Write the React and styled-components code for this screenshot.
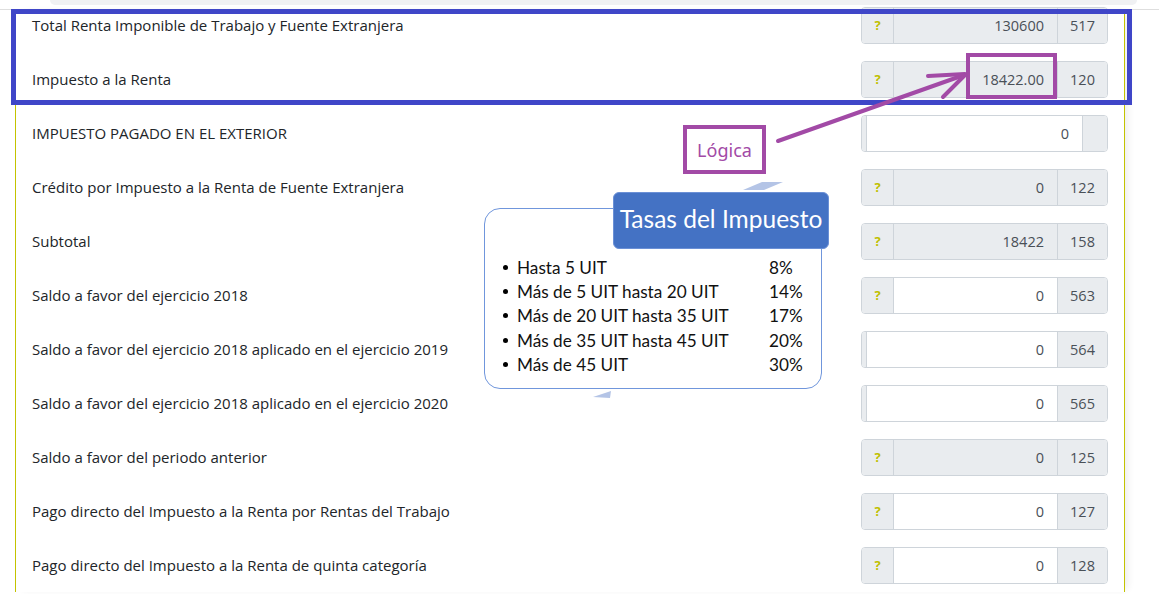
import React from 'react';
import styled, { createGlobalStyle } from 'styled-components';

const GlobalStyle = createGlobalStyle`
    body {
        margin: 0;
        background: #fff;
        font-family: "Open Sans", "Noto Sans", sans-serif;
        color: #212529;
        overflow: hidden;
    }
`;

const Page = styled.div`
    position: relative;
    width: 1159px;
    height: 594px;
    overflow: hidden;
`;

const TopStrip = styled.div`
    height: 5px;
    margin: 0 22px 0 50px;
    background: #f0f1f3;
    border-radius: 0 0 12px 12px;
`;

const Divider = styled.div`
    margin-top: 4px;
    border-top: 1px solid #dedede;
`;

const Card = styled.section`
    width: 1108px;
    margin-left: 15px;
    border-left: 1px solid #c3c300;
    border-right: 1px solid #c3c300;
    box-shadow: 5px 0 8px -3px rgba(0, 0, 0, 0.09);
    background: #fff;
`;

const Row = styled.div`
    display: flex;
    align-items: center;
    height: ${p => (p.first ? '42px' : '54px')};
    padding: 0 16px ${p => (p.first ? '12px' : '0')} 16px;
    box-sizing: border-box;
`;

const Label = styled.div`
    flex: 1;
    font-size: 15px;
    color: #212529;
`;

const Group = styled.div`
    display: flex;
    width: 247px;
    height: 37px;
    border: 1px solid #ced4da;
    border-radius: 4px;
    box-sizing: border-box;
    overflow: hidden;
    font-size: 14.5px;
    color: #495057;
`;

const Help = styled.div`
    width: 31px;
    background: #e9ecef;
    border-right: 1px solid #ced4da;
    display: flex;
    align-items: center;
    justify-content: center;
    font-weight: 700;
    font-size: 13px;
    color: #bfbf00;
`;

const Sliver = styled.div`
    width: 4px;
    background: #e9ecef;
    border-right: 1px solid #ced4da;
`;

const Value = styled.div`
    flex: 1;
    background: ${p => (p.readOnly ? '#e9ecef' : '#fff')};
    display: flex;
    align-items: center;
    justify-content: flex-end;
    padding-right: 13px;
`;

const Code = styled.div`
    width: ${p => (p.empty ? '24px' : '49px')};
    background: #e9ecef;
    border-left: 1px solid #ced4da;
    display: flex;
    align-items: center;
    justify-content: center;
`;

const Highlight = styled.div`
    position: absolute;
    left: ${p => p.x}px;
    top: ${p => p.y}px;
    width: ${p => p.w}px;
    height: ${p => p.h}px;
    border: ${p => p.bw}px solid ${p => p.color};
    box-sizing: border-box;
`;

const LogicBox = styled.div`
    position: absolute;
    left: 683px;
    top: 125px;
    width: 83px;
    height: 49px;
    border: 4px solid #a24aa6;
    box-sizing: border-box;
    display: flex;
    align-items: center;
    justify-content: center;
    font-size: 18px;
    color: #a24aa6;
    font-family: "Noto Sans", sans-serif;
`;

const Overlay = styled.svg`
    position: absolute;
    left: 0;
    top: 0;
    pointer-events: none;
`;

const Rates = styled.div`
    position: absolute;
    left: 484px;
    top: 208px;
    width: 338px;
    height: 181px;
    border: 1.5px solid #7096dc;
    border-radius: 16px;
    background: #fff;
    box-sizing: border-box;
    padding: 46px 0 0 12px;
    font-family: Lato, "Noto Sans", sans-serif;
`;

const RatesTitle = styled.div`
    position: absolute;
    left: 128px;
    top: -17px;
    width: 216px;
    height: 57px;
    padding-bottom: 5px;
    background: #4472c4;
    border: 1px solid #6b90d6;
    border-radius: 6px;
    box-sizing: border-box;
    display: flex;
    align-items: center;
    justify-content: center;
    color: #fff;
    font-size: 24.5px;
`;

const RateList = styled.ul`
    margin: 0;
    padding: 0;
    list-style: none;
`;

const RateItem = styled.li`
    display: flex;
    align-items: center;
    height: 24.4px;
    font-size: 17.2px;
    color: #111;
    &::before {
        content: '';
        width: 5px;
        height: 5px;
        border-radius: 50%;
        background: #000;
        margin: 0 9px 0 6px;
    }
`;

const RateText = styled.span`
    width: 252px;
`;

const rows = [
    { label: 'Total Renta Imponible de Trabajo y Fuente Extranjera', help: true, ro: true, value: '130600', code: '517' },
    { label: 'Impuesto a la Renta', help: true, ro: true, value: '18422.00', code: '120' },
    { label: 'IMPUESTO PAGADO EN EL EXTERIOR', help: false, ro: false, value: '0', code: '' },
    { label: 'Crédito por Impuesto a la Renta de Fuente Extranjera', help: true, ro: true, value: '0', code: '122' },
    { label: 'Subtotal', help: true, ro: true, value: '18422', code: '158' },
    { label: 'Saldo a favor del ejercicio 2018', help: true, ro: false, value: '0', code: '563' },
    { label: 'Saldo a favor del ejercicio 2018 aplicado en el ejercicio 2019', help: false, ro: false, value: '0', code: '564' },
    { label: 'Saldo a favor del ejercicio 2018 aplicado en el ejercicio 2020', help: false, ro: false, value: '0', code: '565' },
    { label: 'Saldo a favor del periodo anterior', help: true, ro: true, value: '0', code: '125' },
    { label: 'Pago directo del Impuesto a la Renta por Rentas del Trabajo', help: true, ro: false, value: '0', code: '127' },
    { label: 'Pago directo del Impuesto a la Renta de quinta categoría', help: true, ro: false, value: '0', code: '128' },
];

const rates = [
    ['Hasta 5 UIT', '8%'],
    ['Más de 5 UIT hasta 20 UIT', '14%'],
    ['Más de 20 UIT hasta 35 UIT', '17%'],
    ['Más de 35 UIT hasta 45 UIT', '20%'],
    ['Más de 45 UIT', '30%'],
];

const App = () => {
    return (
        <Page>
            <GlobalStyle />
            <TopStrip />
            <Divider />
            <Card>
                {rows.map((r, i) => (
                    <Row key={r.label} first={i === 0}>
                        <Label>{r.label}</Label>
                        <Group>
                            {r.help ? <Help>?</Help> : <Sliver />}
                            <Value readOnly={r.ro}>{r.value}</Value>
                            <Code empty={!r.code}>{r.code}</Code>
                        </Group>
                    </Row>
                ))}
            </Card>

            <Highlight x={11} y={9} w={1121} h={96} bw={5} color="#3f46c8" />
            <Highlight x={966} y={53} w={91} h={46} bw={4} color="#a24aa6" />
            <LogicBox>Lógica</LogicBox>

            <Overlay width="1159" height="594">
                <g stroke="#a24aa6" strokeWidth="4" strokeLinecap="round" fill="none">
                    <line x1="778" y1="141" x2="964" y2="75" />
                    <line x1="928" y1="76" x2="965" y2="74" />
                    <line x1="943" y1="97" x2="965" y2="75" />
                </g>
                <polygon points="743,190 762,182 783,182 764,190" fill="#b4c4e6" />
                <polygon points="593,397 611,391 610,398" fill="#b4c4e6" />
            </Overlay>

            <Rates>
                <RatesTitle>Tasas del Impuesto</RatesTitle>
                <RateList>
                    {rates.map(([t, p]) => (
                        <RateItem key={t}>
                            <RateText>{t}</RateText>
                            <span>{p}</span>
                        </RateItem>
                    ))}
                </RateList>
            </Rates>
        </Page>
    );
};

export default App;
